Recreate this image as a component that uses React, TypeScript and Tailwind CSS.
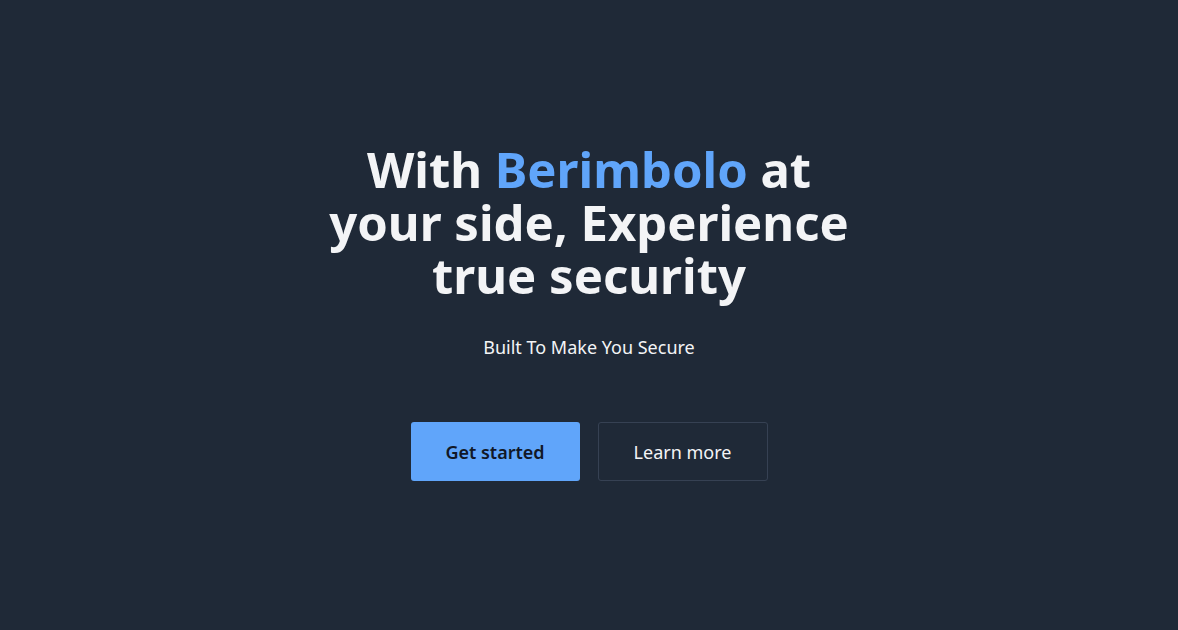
export default function App() {
  return (
    <main
      className="min-h-screen w-full bg-[#1f2937] text-gray-100 flex items-center justify-center"
      style={{ fontFamily: '"Noto Sans", "Open Sans", sans-serif' }}
    >
      <section className="flex flex-col items-center text-center px-6 pb-[6px]">
        <h1 className="max-w-[530px] text-[49px] leading-[53px] font-bold">
          With <span className="text-[#60a5fa]">Berimbolo</span> at your side, Experience true security
        </h1>
        <p className="mt-[31px] text-lg">Built To Make You Secure</p>
        <div className="mt-[61px] flex gap-[18px]">
          <a
            href="#"
            className="w-[169px] h-[59px] flex items-center justify-center rounded-[3px] bg-[#60a5fa] text-[#111827] text-lg font-semibold"
          >
            Get started
          </a>
          <a
            href="#"
            className="w-[170px] h-[59px] flex items-center justify-center rounded-[3px] border border-gray-700 text-lg"
          >
            Learn more
          </a>
        </div>
      </section>
    </main>
  );
}
